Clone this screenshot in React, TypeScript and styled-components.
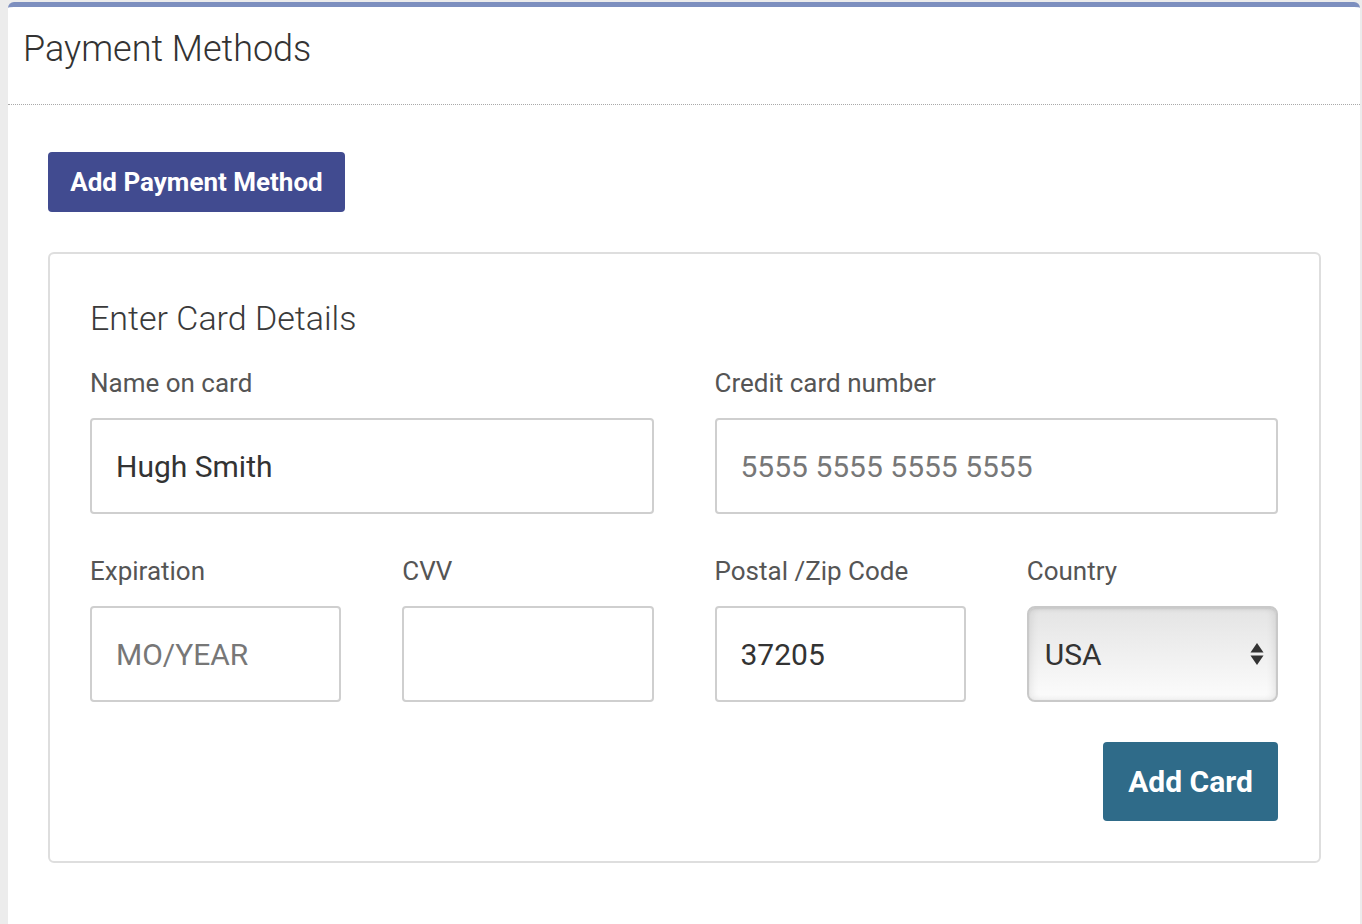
import styled, { createGlobalStyle } from 'styled-components';

const GlobalStyle = createGlobalStyle`
  html, body {
    margin: 0;
    padding: 0;
    background: #ececec;
    font-family: Roboto, 'Liberation Sans', sans-serif;
  }
  * {
    box-sizing: border-box;
  }
`;

const Page = styled.div`
  padding: 2px 2px 0 8px;
  min-height: 924px;
  display: flex;
`;

const Panel = styled.section`
  flex: 1;
  background: #fff;
  border-top: 5px solid #7d8fbf;
  border-radius: 6px 6px 0 0;
  min-height: 922px;
`;

const PanelHeader = styled.div`
  padding: 21px 15px 34px;
  border-bottom: 1px dotted #a9a9a9;
`;

const PanelTitle = styled.h2`
  margin: 0;
  font-size: 36px;
  line-height: 42px;
  font-weight: 300;
  color: #333;
`;

const PanelBody = styled.div`
  padding: 47px 39px 60px 40px;
`;

const PrimaryButton = styled.button<{ $bg: string; $size: number; $w: number; $h: number }>`
  display: flex;
  align-items: center;
  justify-content: center;
  width: ${(p) => p.$w}px;
  height: ${(p) => p.$h}px;
  padding: 0;
  border: none;
  border-radius: 4px;
  background: ${(p) => p.$bg};
  color: #fff;
  font-family: Roboto, 'Liberation Sans', sans-serif;
  font-weight: 700;
  font-size: ${(p) => p.$size}px;
  cursor: pointer;
`;

const Card = styled.div`
  margin-top: 40px;
  border: 2px solid #dedede;
  border-radius: 6px;
  padding: 44px 41px 40px 40px;
`;

const CardTitle = styled.h3`
  margin: 0 0 31px;
  font-size: 34px;
  line-height: 40px;
  font-weight: 300;
  color: #3a3a3a;
`;

const FieldGrid = styled.div`
  display: grid;
  grid-template-columns: repeat(4, 1fr);
  column-gap: 61px;
  row-gap: 43px;
`;

const Field = styled.div<{ $span?: number }>`
  grid-column: span ${(p) => p.$span ?? 1};
  display: flex;
  flex-direction: column;
`;

const Label = styled.label`
  font-size: 26px;
  line-height: 28px;
  color: #555;
  margin-bottom: 21px;
`;

const Input = styled.input`
  height: 96px;
  width: 100%;
  border: 2px solid #cfcfcf;
  border-radius: 4px;
  padding: 0 24px;
  font-family: Roboto, 'Liberation Sans', sans-serif;
  font-size: 30px;
  color: #333;
  background: #fff;
  outline: none;

  &::placeholder {
    color: #777;
  }
`;

const SelectBox = styled.div`
  position: relative;
  height: 96px;
  border: 2px solid #c9c9c9;
  border-radius: 8px;
  background: linear-gradient(#e4e4e4, #f1f1f1 55%, #fcfcfc);
  box-shadow: inset 0 1px 2px rgba(0, 0, 0, 0.08), inset -4px 0 6px rgba(0, 0, 0, 0.06),
    inset 4px 0 6px rgba(0, 0, 0, 0.06);
  display: flex;
  align-items: center;
  padding: 0 16px;
  font-size: 30px;
  color: #333;
`;

const Arrows = styled.svg`
  position: absolute;
  right: 12px;
  top: 50%;
  transform: translateY(-50%);
`;

const Actions = styled.div`
  display: flex;
  justify-content: flex-end;
  margin-top: 40px;
`;

export default function App() {
  return (
    <>
      <GlobalStyle />
      <Page>
        <Panel>
          <PanelHeader>
            <PanelTitle>Payment Methods</PanelTitle>
          </PanelHeader>
          <PanelBody>
            <PrimaryButton $bg="#414b90" $size={26} $w={297} $h={60}>
              Add Payment Method
            </PrimaryButton>
            <Card>
              <CardTitle>Enter Card Details</CardTitle>
              <FieldGrid>
                <Field $span={2}>
                  <Label>Name on card</Label>
                  <Input defaultValue="Hugh Smith" />
                </Field>
                <Field $span={2}>
                  <Label>Credit card number</Label>
                  <Input placeholder="5555 5555 5555 5555" />
                </Field>
                <Field>
                  <Label>Expiration</Label>
                  <Input placeholder="MO/YEAR" />
                </Field>
                <Field>
                  <Label>CVV</Label>
                  <Input />
                </Field>
                <Field>
                  <Label>Postal /Zip Code</Label>
                  <Input defaultValue="37205" />
                </Field>
                <Field>
                  <Label>Country</Label>
                  <SelectBox>
                    USA
                    <Arrows width="14" height="24" viewBox="0 0 14 24">
                      <path d="M7 1 L13.5 10.5 H0.5 Z" fill="#333" />
                      <path d="M7 23 L13.5 13.5 H0.5 Z" fill="#333" />
                    </Arrows>
                  </SelectBox>
                </Field>
              </FieldGrid>
              <Actions>
                <PrimaryButton $bg="#2f6b89" $size={30} $w={175} $h={79}>
                  Add Card
                </PrimaryButton>
              </Actions>
            </Card>
          </PanelBody>
        </Panel>
      </Page>
    </>
  );
}
